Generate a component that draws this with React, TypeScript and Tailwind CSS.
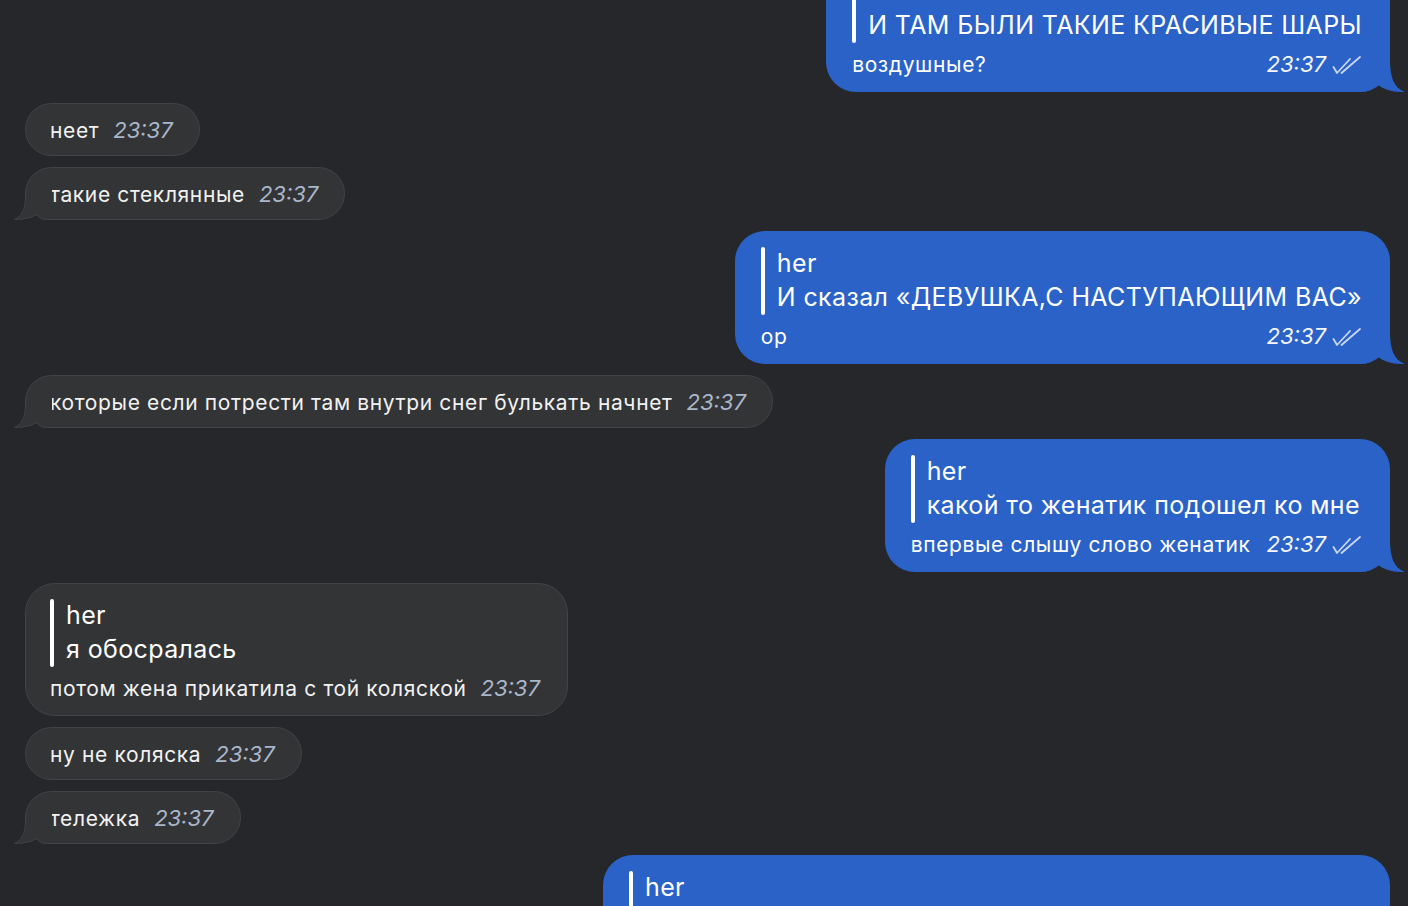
import React from "react";

// Double check mark next to outgoing time
const Checks = () => (
  <svg
    width="30"
    height="20"
    viewBox="0 0 30 20"
    fill="none"
    stroke="#c9d5ef"
    strokeWidth="1.8"
    strokeLinecap="round"
    strokeLinejoin="round"
  >
    <path d="M1.5 12 L5 18 L18 4" />
    <path d="M9.5 18 L28 2" />
  </svg>
);

// Tail for incoming (grey) bubbles, bottom-left
const TailLeft = () => (
  <svg
    className="absolute left-[-14px] bottom-[-1px]"
    width="40"
    height="30"
    viewBox="0 0 40 30"
  >
    <path
      d="M14.2 0 L14.2 2 C14.2 16 12.5 25 3 29.5 Q16 29 24.7 24.5 Q28 29.5 34 29.5 L40 29.5 L40 0 Z"
      fill="#333436"
    />
    <path
      d="M13.7 0 L13.7 2 C13.7 16 12 25 2.5 29.5 Q16 29.5 24.7 24.5 Q28 29.5 34 29.5 L40 29.5"
      fill="none"
      stroke="#414347"
      strokeWidth="1"
    />
  </svg>
);

// Tail for outgoing (blue) bubbles, bottom-right
const TailRight = () => (
  <svg
    className="absolute right-[-15px] bottom-0"
    width="45"
    height="30"
    viewBox="0 0 45 30"
  >
    <path
      d="M30 0 C30.5 14 33 25 44.5 30 Q28 30.5 18 23 Q12 29.5 0 30 L0 0 Z"
      fill="#2a62c8"
    />
  </svg>
);

const Time = ({ out }: { out?: boolean }) => (
  <span
    className={
      out
        ? "text-[22px] italic text-[#f2f5fb]"
        : "text-[22px] italic text-[#a9b6ca]"
    }
  >
    23:37
  </span>
);

// Plain incoming message
const Incoming = ({ text, tail }: { text: string; tail?: boolean }) => (
  <div className="relative self-start h-[53px] flex items-baseline pt-[10px] pl-[24px] pr-[26px] rounded-full bg-[#333436] border border-[#414347]">
    <span className="text-[21px] text-[#f1f1f1] tracking-[0.03em]">{text}</span>
    <span className="ml-[14px]">
      <Time />
    </span>
    {tail && <TailLeft />}
  </div>
);

// Quote block (bar + author + quoted text)
const Quote = ({ author, text }: { author: string; text: string }) => (
  <div className="flex">
    <div className="w-[4px] rounded-full bg-white mr-[12px]" />
    <div className="flex flex-col text-white">
      <div className="text-[25px] leading-[32px] tracking-[0.015em]">{author}</div>
      <div className="text-[25px] leading-[36px] tracking-[0.015em] whitespace-nowrap">
        {text}
      </div>
    </div>
  </div>
);

// Incoming message with a reply quote
const IncomingReply = ({ quote, text }: { quote: string; text: string }) => (
  <div className="relative self-start rounded-[30px] bg-[#333436] border border-[#414347] pl-[24px] pr-[27px] pt-[15px] pb-[13px]">
    <Quote author="her" text={quote} />
    <div className="mt-[5px] h-[30px] flex items-baseline gap-[14px]">
      <span className="text-[21px] text-[#f1f1f1] tracking-[0.03em] whitespace-nowrap">
        {text}
      </span>
      <Time />
    </div>
  </div>
);

// Outgoing message with a reply quote
const OutgoingReply = ({
  quote,
  text,
  className = "",
}: {
  quote: string;
  text: string;
  className?: string;
}) => (
  <div
    className={
      "relative self-end rounded-[30px] bg-[#2a62c8] pl-[26px] pr-[28px] pt-[16px] pb-[14px] " +
      className
    }
  >
    <Quote author="her" text={quote} />
    <div className="mt-[5px] h-[30px] flex items-baseline justify-between gap-[16px]">
      <span className="text-[21px] text-white tracking-[0.03em] whitespace-nowrap">
        {text}
      </span>
      <span className="flex items-baseline gap-[6px]">
        <Time out />
        <span className="self-center">
          <Checks />
        </span>
      </span>
    </div>
    <TailRight />
  </div>
);

export default function App() {
  return (
    <div className="h-[906px] w-full overflow-hidden bg-[#25272a] font-['Inter',sans-serif]">
      <div className="flex flex-col gap-[11px] pl-[25px] pr-[18px] mt-[-41px]">
        <OutgoingReply
          quote="И ТАМ БЫЛИ ТАКИЕ КРАСИВЫЕ ШАРЫ"
          text="воздушные?"
        />
        <Incoming text="неет" />
        <Incoming text="такие стеклянные" tail />
        <OutgoingReply
          quote="И сказал «ДЕВУШКА,С НАСТУПАЮЩИМ ВАС»"
          text="ор"
        />
        <Incoming
          text="которые если потрести там внутри снег булькать начнет"
          tail
        />
        <OutgoingReply
          quote="какой то женатик подошел ко мне"
          text="впервые слышу слово женатик"
        />
        <IncomingReply
          quote="я обосралась"
          text="потом жена прикатила с той коляской"
        />
        <Incoming text="ну не коляска" />
        <Incoming text="тележка" tail />
        <OutgoingReply
          quote="а потом еще и сказал что я ему понравилась"
          text="ахахах"
          className="w-[787px]"
        />
      </div>
    </div>
  );
}
